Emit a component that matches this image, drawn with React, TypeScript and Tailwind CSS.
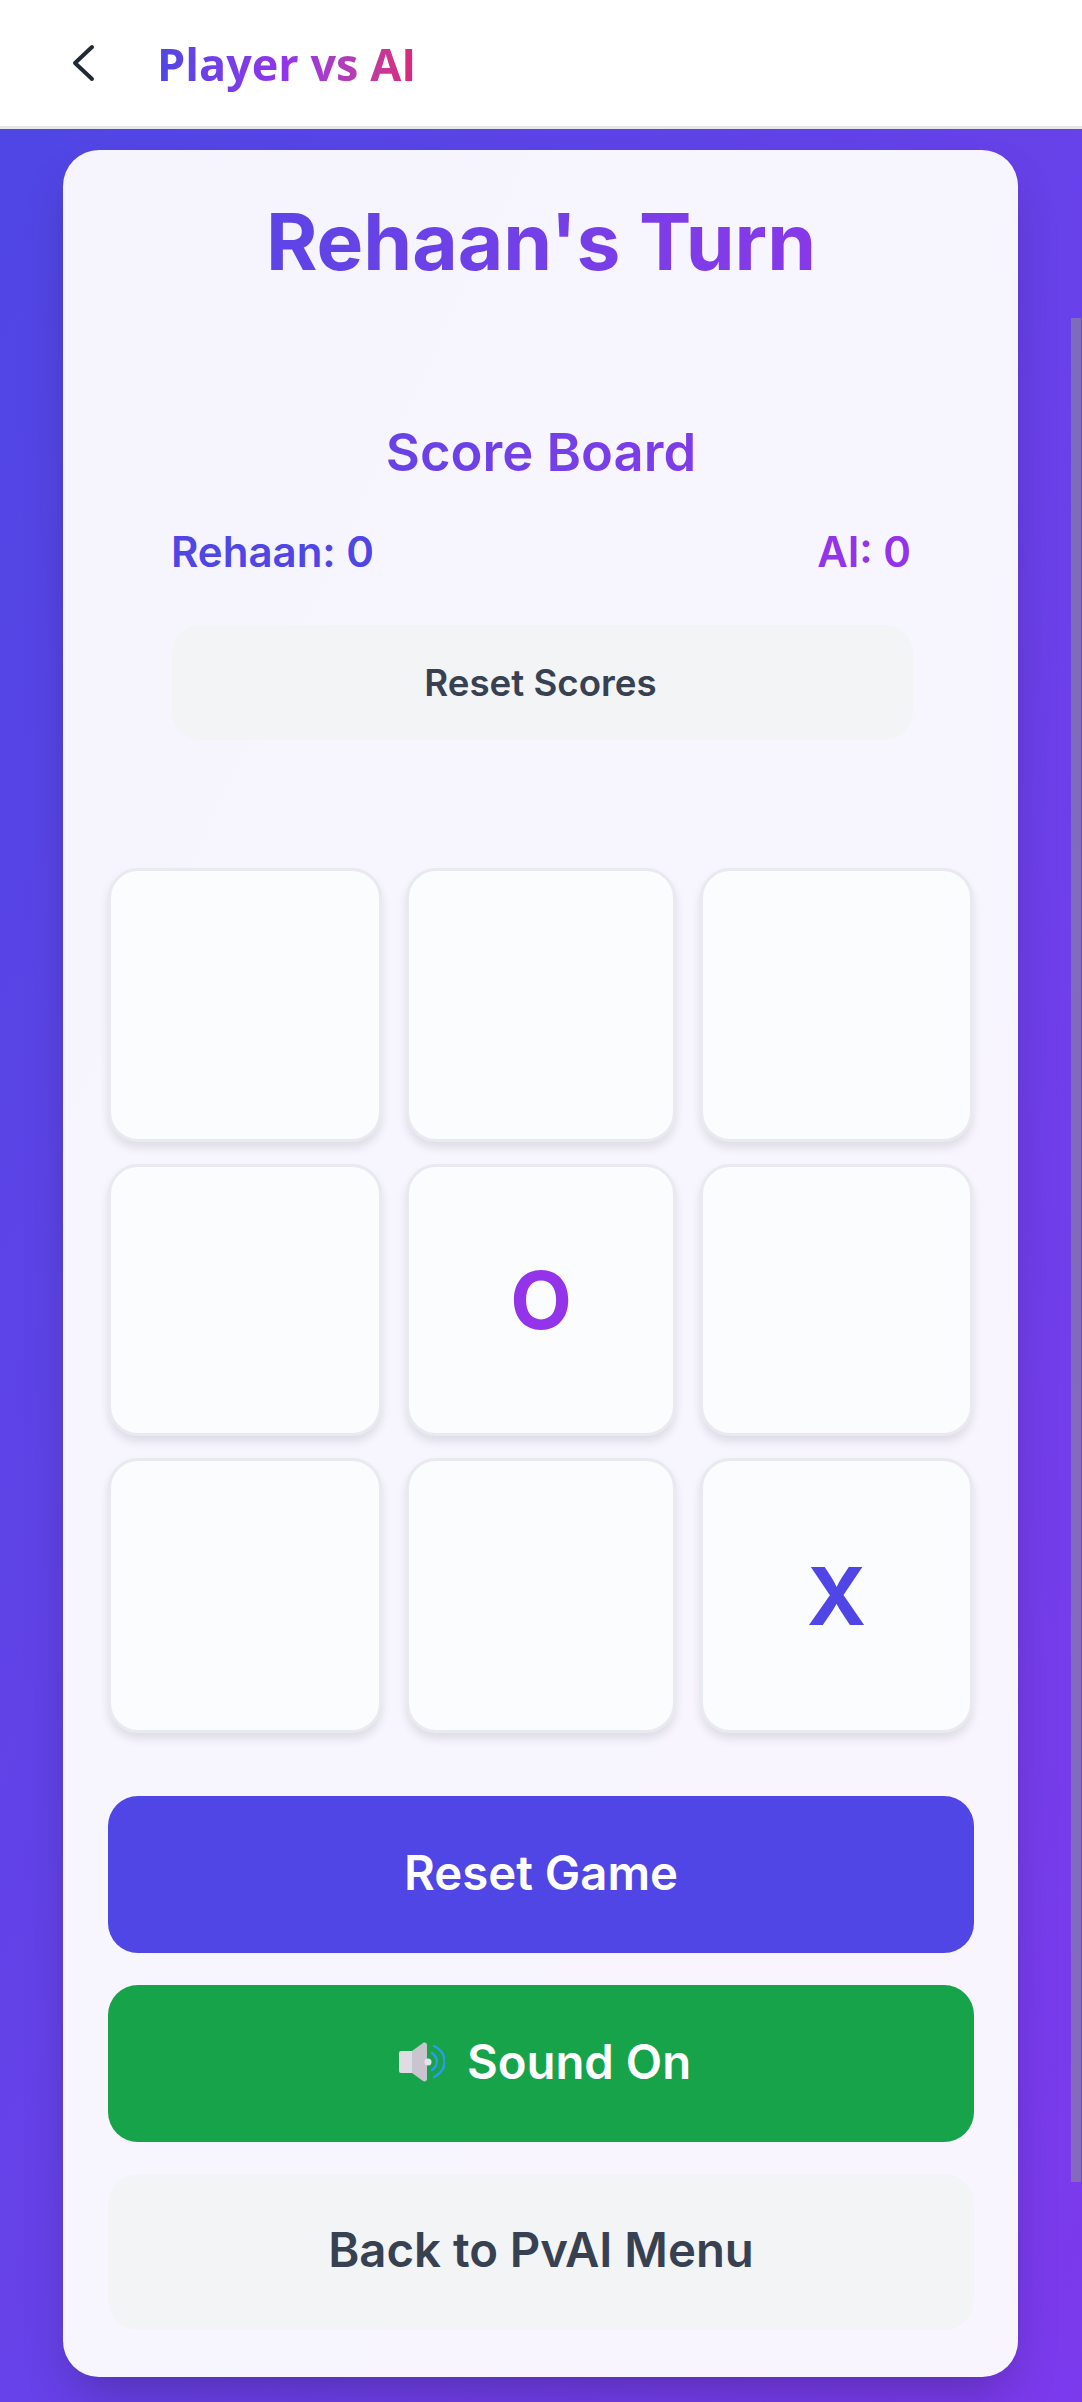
const cellClass =
  'flex items-center justify-center rounded-[30px] border-[3px] border-[#e9e9f0] bg-[#fbfcfe] text-[80px] font-bold leading-none shadow-[0_6px_10px_rgba(0,0,0,0.1)]';

function SpeakerIcon() {
  return (
    <svg width="46" height="40" viewBox="0 0 46 40" fill="none">
      <path d="M2 9h12v22H2a2 2 0 0 1-2-2V11a2 2 0 0 1 2-2z" fill="#dfdde3" />
      <path d="M13 9l11-8c2-1 4 0 4 2v34c0 2-2 3-4 2L13 31z" fill="#c9c5cf" />
      <circle cx="29" cy="20" r="3.5" fill="#e6e4ea" />
      <path d="M33 11c6.500 5 6.500 12 0 17" stroke="#2f9be8" strokeWidth="2.5" strokeLinecap="round" />
      <path d="M35 4c14 7 14 24 0 31" stroke="#2f9be8" strokeWidth="2.5" strokeLinecap="round" />
    </svg>
  );
}

export default function App() {
  return (
    <div className="flex h-screen flex-col overflow-hidden bg-white font-[Inter,sans-serif]">
      {/* Header */}
      <header className="flex h-[129px] shrink-0 items-center border-b-[3px] border-[#e5e7eb] bg-white pl-[71px]">
        <svg width="24" height="38" viewBox="0 0 24 38" fill="none" className="mr-[62px]">
          <path d="M21 3L4 19l17 16" stroke="#1f2937" strokeWidth="4" strokeLinecap="round" strokeLinejoin="round" />
        </svg>
        <h1 className="mt-[2px] bg-gradient-to-r from-[#4f46e5] via-[#9333ea] to-[#db2777] bg-clip-text font-['Open_Sans',sans-serif] text-[45px] font-bold leading-[60px] text-transparent">
          Player vs AI
        </h1>
      </header>

      {/* Game screen */}
      <main className="relative flex-1 bg-gradient-to-br from-[#4f46e5] to-[#7c3aed] pl-[63px] pt-[21px]">
        <div className="absolute right-[1px] top-[189px] h-[1864px] w-[10px] bg-[#8a8a9a]/60" />
        <section className="h-[2227px] w-[955px] rounded-[36px] bg-white/95 pl-[45px] pr-[44px] pt-[52px] shadow-[0_25px_50px_-12px_rgba(0,0,0,0.25)]">
          <h2 className="bg-gradient-to-r from-[#4f46e5] to-[#9333ea] bg-clip-text text-center text-[78.5px] font-bold leading-[80px] text-transparent">
            Rehaan's Turn
          </h2>

          <h3 className="mt-[140px] bg-gradient-to-r from-[#4f46e5] to-[#9333ea] bg-clip-text text-center text-[52.5px] font-semibold leading-[60px] text-transparent">
            Score Board
          </h3>
          <div className="ml-[63px] mr-[63px] mt-[45px] flex justify-between text-[42px] font-semibold leading-[50px]">
            <span className="text-[#4f46e5]">Rehaan: 0</span>
            <span className="text-[#9333ea]">AI: 0</span>
          </div>
          <button className="ml-[64px] mt-[48px] block h-[115px] w-[741px] rounded-[28px] bg-[#f3f4f6] pr-[4px] text-[36.7px] font-semibold text-[#374151]">
            Reset Scores
          </button>

          <div className="mt-[128px] grid grid-cols-[274px_270px_273px] grid-rows-[274px_272px_275px] gap-x-[24px] gap-y-[22px]">
            <div className={cellClass} />
            <div className={cellClass} />
            <div className={cellClass} />
            <div className={cellClass} />
            <div className={`${cellClass} text-[#9333ea]`}>O</div>
            <div className={cellClass} />
            <div className={cellClass} />
            <div className={cellClass} />
            <div className={`${cellClass} text-[#4f46e5]`}>X</div>
          </div>

          <div className="mt-[63px] flex flex-col gap-[32px]">
            <button className="h-[157px] rounded-[30px] bg-[#4f46e5] pb-[3px] text-[47.3px] font-semibold text-white">
              Reset Game
            </button>
            <button className="flex h-[157px] items-center justify-center gap-[22px] rounded-[30px] bg-[#16a34a] pb-[3px] pl-[8px] text-[47.3px] font-semibold text-white">
              <SpeakerIcon />
              <span>Sound On</span>
            </button>
            <button className="h-[156px] rounded-[30px] bg-[#f3f4f6] pb-[3px] text-[47.3px] font-semibold text-[#374151]">
              Back to PvAI Menu
            </button>
          </div>
        </section>
      </main>
    </div>
  );
}
